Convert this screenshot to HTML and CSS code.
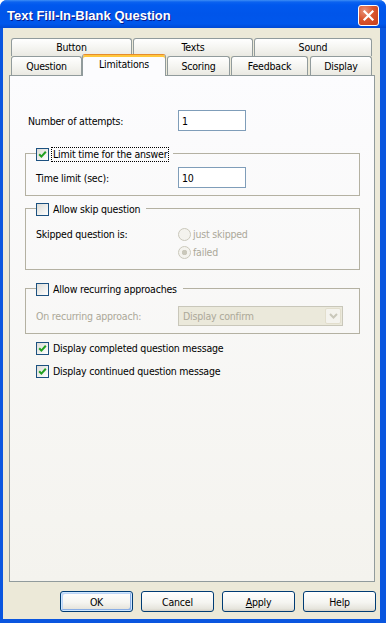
FILE: index.html
```html
<!DOCTYPE html>
<html lang="en">
<head>
<meta charset="UTF-8">
<meta name="viewport" content="width=device-width, initial-scale=1.0">
<title>Text Fill-In-Blank Question</title>
<link rel="stylesheet" href="styles.css">
</head>
<body>
<div class="window">
  <div class="titlebar">
    <span class="title">Text Fill-In-Blank Question</span>
    <span class="close">
      <svg width="19" height="19" viewBox="0 0 19 19"><path d="M5.5 5.5 L13.5 13.5 M13.5 5.5 L5.5 13.5" stroke="#fff" stroke-width="2.2" stroke-linecap="square"/></svg>
    </span>
  </div>

  <div class="client">
    <div class="tabs">
      <div class="tab-row back">
        <div class="tab t-button">Button</div>
        <div class="tab t-texts">Texts</div>
        <div class="tab t-sound">Sound</div>
      </div>
      <div class="tab-row front">
        <div class="tab t-question">Question</div>
        <div class="tab t-limits selected">Limitations</div>
        <div class="tab t-scoring">Scoring</div>
        <div class="tab t-feedback">Feedback</div>
        <div class="tab t-display">Display</div>
      </div>
    </div>

    <div class="pane">
      <div class="field-row attempts">
        <span class="field-label">Number of attempts:</span>
        <input class="textbox" type="text" value="1">
      </div>

      <fieldset class="group g-time">
        <legend>
          <span class="check-wrap">
            <span class="check"><svg width="11" height="11" viewBox="0 0 11 11"><path d="M2.2 5.2 L4.4 7.6 L8.8 2.8" fill="none" stroke="#21A121" stroke-width="2"/></svg></span>
            <span class="check-label focused">Limit time for the answer</span>
          </span>
        </legend>
        <div class="field-row">
          <span class="field-label">Time limit (sec):</span>
          <input class="textbox" type="text" value="10">
        </div>
      </fieldset>

      <fieldset class="group g-skip">
        <legend>
          <span class="check-wrap">
            <span class="check"></span>
            <span class="check-label">Allow skip question</span>
          </span>
        </legend>
        <div class="radio-block">
          <span class="field-label">Skipped question is:</span>
          <div class="radios">
            <div class="radio-row"><span class="radio"></span><span class="radio-label">just skipped</span></div>
            <div class="radio-row"><span class="radio on"></span><span class="radio-label">failed</span></div>
          </div>
        </div>
      </fieldset>

      <fieldset class="group g-recur">
        <legend>
          <span class="check-wrap">
            <span class="check"></span>
            <span class="check-label">Allow recurring approaches</span>
          </span>
        </legend>
        <div class="field-row">
          <span class="field-label disabled">On recurring approach:</span>
          <div class="combo">
            <span class="combo-text">Display confirm</span>
            <span class="combo-btn"><svg width="9" height="6" viewBox="0 0 9 6"><path d="M1 1 L4.5 4.5 L8 1" fill="none" stroke="#C9C7BA" stroke-width="2"/></svg></span>
          </div>
        </div>
      </fieldset>

      <div class="check-row first">
        <span class="check"><svg width="11" height="11" viewBox="0 0 11 11"><path d="M2.2 5.2 L4.4 7.6 L8.8 2.8" fill="none" stroke="#21A121" stroke-width="2"/></svg></span>
        <span class="check-label">Display completed question message</span>
      </div>
      <div class="check-row">
        <span class="check"><svg width="11" height="11" viewBox="0 0 11 11"><path d="M2.2 5.2 L4.4 7.6 L8.8 2.8" fill="none" stroke="#21A121" stroke-width="2"/></svg></span>
        <span class="check-label">Display continued question message</span>
      </div>
    </div>

    <div class="buttons">
      <button class="btn default">OK</button>
      <button class="btn">Cancel</button>
      <button class="btn"><u>A</u>pply</button>
      <button class="btn">Help</button>
    </div>
  </div>
</div>
</body>
</html>
```

FILE: styles.css
```css
body { margin: 0; background: #fff; font-family: "DejaVu Sans Condensed", "DejaVu Sans", sans-serif; font-stretch: condensed; font-size: 10.5px; letter-spacing: -0.2px; color: #000; }

.window { width: 386px; height: 623px; display: flex; flex-direction: column; background: #0A56DF; border-radius: 7px 7px 0 0; overflow: hidden; }

.titlebar {
  height: 28px; flex: none; box-sizing: border-box; padding: 3px 7px 0 7px;
  display: flex; align-items: center;
  background: linear-gradient(#3D8DF5 0, #0B62F0 2px, #0058EE 5px, #0055EA 50%, #0057EC 85%, #0049D4 100%);
}
.title { flex: 1; color: #fff; font-family: "Liberation Sans", Arial, sans-serif; font-stretch: normal; letter-spacing: 0; font-weight: bold; font-size: 13px; text-shadow: 1px 1px #0A1A8C; }
.close {
  width: 21px; height: 21px; box-sizing: border-box; border: 1px solid #fff; border-radius: 3px;
  background: radial-gradient(circle at 30% 25%, #E9937A 0, #D9552E 45%, #C63D1B 100%);
  display: flex; align-items: center; justify-content: center;
}

.client { flex: 1; margin: 0 6px 4px 3px; background: #ECE9D8; padding: 10px 0 0 6px; }

/* tabs */
.tabs { height: 37px; padding-left: 2px; display: flex; flex-direction: column; }
.tab-row { display: flex; }
.tab {
  box-sizing: border-box; border: 1px solid #919B9C; border-bottom: none; border-radius: 3px 3px 0 0;
  background: linear-gradient(#FFFFFF, #F4F4F0 55%, #EAE9E2);
  text-align: center; white-space: nowrap;
}
.back .tab { height: 18px; line-height: 17px; }
.front { height: 19px; align-items: flex-end; }
.front .tab { height: 19px; line-height: 18px; }
.t-button { width: 121px; }
.t-texts { width: 120px; margin-left: 1px; }
.t-sound { width: 118px; margin-left: 1px; }
.t-question { width: 71px; }
.t-limits { width: 84px; }
.t-scoring { width: 63px; margin-left: 1px; }
.t-feedback { width: 77px; margin-left: 1px; }
.t-display { width: 62px; margin-left: 2px; }
.front .tab.selected {
  height: 22px; margin-bottom: -1px; padding-top: 2px; line-height: 14px;
  border-top-color: #E68B2C; box-shadow: inset 0 2px #FFC73C;
  background: #FCFCFE; position: relative; z-index: 1;
}

/* tab page */
.pane {
  box-sizing: border-box; width: 366px; height: 507px;
  border: 1px solid #919B9C; background: linear-gradient(#FCFCFE, #F4F3EE);
  padding: 34px 14px 0 15px;
}
.field-row { display: flex; align-items: center; height: 21px; }
.attempts { padding-left: 3px; }
.attempts .field-label { width: 150px; }
.group .field-label { width: 142px; }
.field-label.disabled { color: #ACA899; }
.textbox {
  box-sizing: border-box; width: 68px; height: 21px; margin: 0; padding: 0 3px;
  border: 1px solid #7F9DB9; background: #fff; font: inherit; letter-spacing: inherit; color: #000; outline: none;
}

.group { margin: 17px 0 0; padding: 8px 8px 8px 10px; border: 1px solid #B4B1A2; min-width: 0; }
.group legend { height: 11px; padding: 0 4px 0 0; }
.g-time { padding-bottom: 7px; }
.g-skip { margin-top: 7px; padding-top: 11px; }
.g-recur { margin-top: 13px; padding-top: 11px; padding-bottom: 7px; }

.check-wrap { display: flex; align-items: center; height: 13px; }
.check {
  flex: none; width: 13px; height: 13px; box-sizing: border-box; border: 1px solid #1C5180;
  background: linear-gradient(135deg, #DCDCD7, #FFFFFF);
  display: flex; align-items: center; justify-content: center;
}
.check-label { margin-left: 2px; padding: 0 1px; line-height: 13px; border: 1px dotted transparent; white-space: nowrap; }
.check-label.focused { border-color: #000; }
.check-row { display: flex; align-items: center; height: 13px; padding-left: 11px; margin-top: 10px; }
.check-row.first { margin-top: 8px; }

.radio-block { display: flex; }
.radio-block .field-label { line-height: 18px; }
.radio-row { display: flex; align-items: center; height: 18px; color: #ACA899; }
.radio {
  width: 13px; height: 13px; box-sizing: border-box; border: 1px solid #CAC8BB; border-radius: 50%;
  background: #F4F3EE;
}
.radio.on { background: radial-gradient(circle, #CAC8BB 0, #CAC8BB 2.4px, #F4F3EE 3px); }
.radio-label { margin-left: 2px; }

.combo {
  box-sizing: border-box; width: 165px; height: 20px; border: 1px solid #C9C7BA; background: #EBE9DB;
  display: flex; align-items: center; color: #ACA899;
}
.combo-text { flex: 1; padding-left: 4px; }
.combo-btn {
  width: 16px; height: 16px; margin-right: 1px; box-sizing: border-box;
  border: 1px solid #E2DECD; border-radius: 2px; background: #F4F3EE;
  display: flex; align-items: center; justify-content: center;
}

/* dialog buttons */
.buttons { display: flex; justify-content: flex-end; gap: 8px; margin-top: 9px; padding-right: 4px; }
.btn {
  box-sizing: border-box; width: 73px; height: 21px; margin: 0; padding: 0;
  border: 1px solid #003C74; border-radius: 3px; font: inherit; letter-spacing: inherit; color: #000;
  background: linear-gradient(#FFFFFF, #F5F5F1 55%, #E6E5DD 88%, #D6D0C5);
}
.btn.default { box-shadow: inset 0 0 0 1px #CEE7FF, inset -2px -2px #89ADE4, inset 2px 2px #BCD4F6; }
```
